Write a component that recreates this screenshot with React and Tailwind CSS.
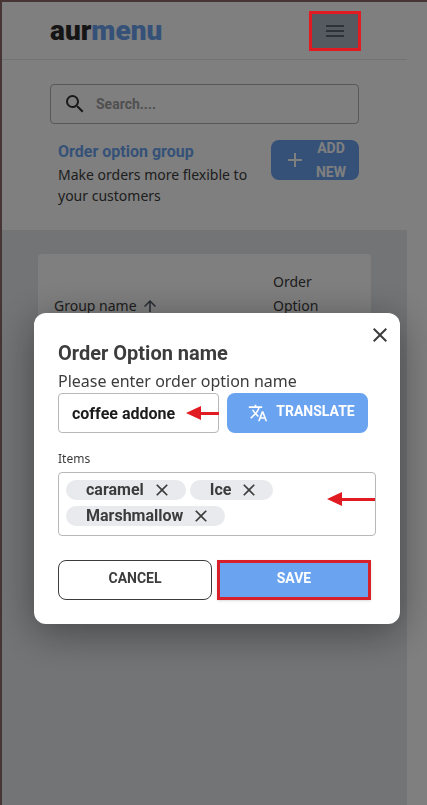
import { MdAdd, MdArrowUpward, MdClose, MdSearch, MdTranslate } from "react-icons/md";

const items = ["caramel", "Ice", "Marshmallow"];

function Arrow({ className }) {
  return (
    <span className={`pointer-events-none absolute flex items-center ${className}`}>
      <span className="h-0 w-0 border-y-[7px] border-r-[15px] border-y-transparent border-r-[#e01b22]" />
      <span className="h-[3px] flex-1 bg-[#e01b22]" />
    </span>
  );
}

function Header() {
  return (
    <header className="flex h-[58px] items-center justify-between border-b border-gray-200 px-12">
      <a href="#" className="font-['Roboto',sans-serif] text-[28px] leading-10 font-black text-[#2b2b2b]">
        aur<span className="text-[#6aa3f0]">menu</span>
      </a>
      <button type="button" aria-label="Menu" className="relative flex h-9 w-12 items-center justify-center rounded bg-[#aab2c0]">
        <svg width="18" height="12" viewBox="0 0 18 12" fill="#5b6270">
          <rect width="18" height="2" />
          <rect y="5" width="18" height="2" />
          <rect y="10" width="18" height="2" />
        </svg>
        <span className="absolute -inset-0.5 z-50 border-3 border-[#e01b22]" />
      </button>
    </header>
  );
}

function OptionGroups() {
  return (
    <>
      <section className="px-12 pt-6 pb-6">
        <label className="flex h-10 items-center gap-[9px] rounded-sm border border-[#b0b0b0] px-3">
          <MdSearch className="size-6 shrink-0 text-[#333333]" />
          <input
            type="search"
            aria-label="Search"
            placeholder="Search...."
            className="w-full min-w-0 bg-transparent text-sm font-bold outline-none placeholder:text-[#a0a0a0]"
          />
        </label>
        <div className="mt-4 flex items-start justify-between pl-2">
          <div className="flex-1">
            <h1 className="text-base font-bold text-[#6aa3f0]">Order option group</h1>
            <p className="font-['Noto_Sans',sans-serif] text-sm leading-[21px] text-[#3c3c3c]">
              Make orders more flexible to your customers
            </p>
          </div>
          <button type="button" className="flex h-10 w-22 items-center justify-center gap-2 rounded-lg bg-[#6aa3f0] px-3 text-sm leading-6 font-bold text-white">
            <MdAdd className="size-6 shrink-0" />
            <span className="w-9">ADD NEW</span>
          </button>
        </div>
      </section>

      <section className="flex-1 bg-[#e6e8eb] px-9 pt-6">
        <div className="rounded bg-white px-4 py-4">
          <table className="w-full font-['Noto_Sans',sans-serif] text-sm leading-6 text-[#3c3c3c]">
            <thead>
              <tr>
                <th className="text-left font-normal">
                  <span className="flex items-center gap-1">
                    Group name <MdArrowUpward className="size-[18px] text-gray-600" />
                  </span>
                </th>
                <th className="w-[82px] pr-6 text-left font-normal">Order Option Items</th>
              </tr>
            </thead>
          </table>
        </div>
      </section>
    </>
  );
}

function OptionDialog() {
  return (
    <div className="fixed inset-0 z-40 bg-black/50 pt-[313px] pr-[27px] pl-[34px]">
      <form
        role="dialog"
        aria-labelledby="dialog-title"
        className="relative rounded-xl bg-white p-6 text-[#3c3c3c] shadow-[0_8px_40px_rgba(0,0,0,0.4)]"
      >
        <button type="button" aria-label="Close" className="absolute top-2.5 right-2">
          <MdClose className="size-6" />
        </button>

        <h2 id="dialog-title" className="pt-0.5 text-xl leading-7 font-bold">Order Option name</h2>
        <label htmlFor="option-name" className="block pt-0.5 font-['Noto_Sans',sans-serif] text-base leading-6">
          Please enter order option name
        </label>
        <div className="flex gap-2 pr-2">
          <div className="relative min-w-0 flex-1">
            <input
              id="option-name"
              defaultValue="coffee addone"
              className="h-10 w-full rounded-sm border border-[#b8b8b8] px-[13px] text-base font-bold text-[#1c1c1c] outline-none"
            />
            <Arrow className="top-[13px] right-0 w-[33px]" />
          </div>
          <button type="button" className="flex h-10 w-[141px] items-center justify-center gap-2 rounded-lg bg-[#6aa3f0] pl-2 text-sm font-bold text-white">
            <MdTranslate className="size-5" />
            <span className="pb-1">TRANSLATE</span>
          </button>
        </div>

        <h3 id="items-label" className="mt-4 mb-[3px] font-['Noto_Sans',sans-serif] text-xs leading-5">Items</h3>
        <ul aria-labelledby="items-label" className="relative flex h-16 flex-wrap content-start gap-x-1 gap-y-1.5 rounded-sm border border-[#b8b8b8] p-[7px]">
          {items.map((item) => (
            <li key={item} className="flex h-5 items-center gap-2 rounded-full bg-[#e9eaee] pr-3.5 pl-5 text-base font-bold">
              {item}
              <button type="button" aria-label={`Remove ${item}`}>
                <MdClose className="size-5" />
              </button>
            </li>
          ))}
          <Arrow className="top-[19px] right-0 w-12" />
        </ul>

        <div className="mt-6 grid grid-cols-2 gap-[5px] pr-[5px] text-sm font-bold">
          <button type="button" className="h-10 rounded-lg border border-[#3c3c3c] pb-1">CANCEL</button>
          <button type="submit" className="h-10 border-3 border-[#d6202a] bg-[#6aa3f0] pb-1 text-white shadow">SAVE</button>
        </div>
      </form>
    </div>
  );
}

export default function App() {
  return (
    <div className="flex min-h-screen flex-col border-t-2 border-l-2 border-[#8f6a6a] bg-white pr-5 font-['Roboto',sans-serif]">
      <Header />
      <OptionGroups />
      <OptionDialog />
    </div>
  );
}
